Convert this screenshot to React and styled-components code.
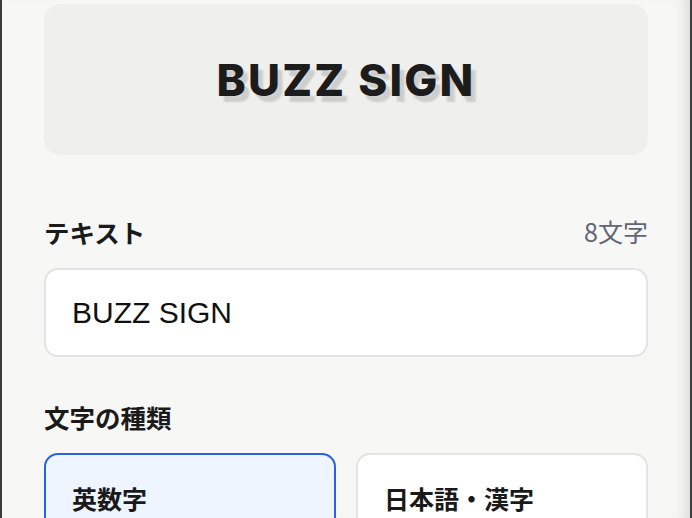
import React, { useState } from "react";
import styled, { createGlobalStyle } from "styled-components";

const GlobalStyle = createGlobalStyle`
  html, body {
    margin: 0;
    padding: 0;
    background: #f7f7f5;
  }
  * {
    box-sizing: border-box;
  }
`;

const JP = `"Noto Sans CJK JP", "Noto Sans", sans-serif`;

const Frame = styled.div`
  width: 692px;
  height: 518px;
  overflow: hidden;
  background: #f7f7f5;
  border-left: 2px solid #3c3c3c;
  border-right: 2px solid #3c3c3c;
  box-shadow: inset -14px 0 14px -10px rgba(0, 0, 0, 0.12);
  padding: 4px 42px 0 42px;
`;

const Preview = styled.div`
  height: 151px;
  border-radius: 16px;
  background: #efefee;
  display: flex;
  align-items: center;
  justify-content: center;
`;

const SignText = styled.div`
  font-family: Inter, "Liberation Sans", sans-serif;
  font-weight: 800;
  font-size: 44px;
  letter-spacing: 2.2px;
  color: #1c1c1c;
  text-shadow: 5px 6px 2px rgba(0, 0, 0, 0.14);
`;

const Section = styled.div`
  margin-top: ${(p) => p.top}px;
`;

const LabelRow = styled.div`
  display: flex;
  justify-content: space-between;
  align-items: center;
  height: 30px;
`;

const Label = styled.div`
  font-family: ${JP};
  font-weight: 700;
  font-size: 25.5px;
  color: #1a1a1a;
`;

const Count = styled.div`
  font-family: ${JP};
  font-size: 25px;
  color: #5f6675;
`;

const TextInput = styled.input`
  display: block;
  width: 100%;
  height: 89px;
  margin-top: 22px;
  padding: 0 26px;
  border: 2px solid #e4e4e4;
  border-radius: 14px;
  background: #fff;
  font-family: "Liberation Sans", Arial, sans-serif;
  font-size: 30px;
  color: #111;
  outline: none;
`;

const Options = styled.div`
  display: grid;
  grid-template-columns: 1fr 1fr;
  gap: 20px;
  margin-top: 22px;
`;

const Option = styled.button`
  height: 90px;
  text-align: left;
  padding: 0 26px;
  border-radius: 14px;
  border: 2px solid ${(p) => (p.active ? "#2563eb" : "#e4e4e4")};
  background: ${(p) => (p.active ? "#eef5ff" : "#fff")};
  font-family: ${JP};
  font-weight: 700;
  font-size: 25px;
  color: #1a1a1a;
  cursor: pointer;
`;

const kinds = ["英数字", "日本語・漢字"];

const App = () => {
  const [text, setText] = useState("BUZZ SIGN");
  const [kind, setKind] = useState(0);

  return (
    <>
      <GlobalStyle />
      <Frame>
        <Preview>
          <SignText>{text}</SignText>
        </Preview>

        <Section top={61}>
          <LabelRow>
            <Label>テキスト</Label>
            <Count>{text.length - 1}文字</Count>
          </LabelRow>
          <TextInput value={text} onChange={(e) => setText(e.target.value)} />
        </Section>

        <Section top={44}>
          <LabelRow>
            <Label>文字の種類</Label>
          </LabelRow>
          <Options>
            {kinds.map((k, i) => (
              <Option key={k} active={i === kind} onClick={() => setKind(i)}>
                {k}
              </Option>
            ))}
          </Options>
        </Section>
      </Frame>
    </>
  );
};

export default App;
